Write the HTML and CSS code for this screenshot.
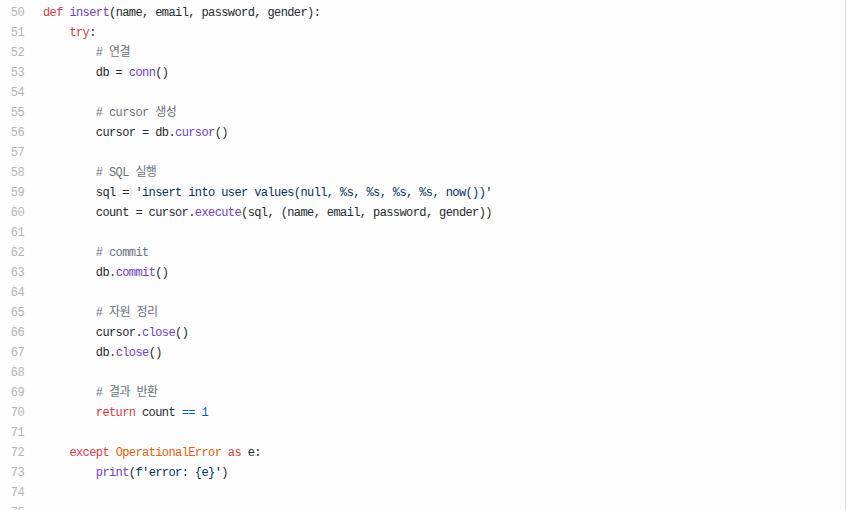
FILE: index.html
```html
<!DOCTYPE html>
<html lang="ko">
<head>
<meta charset="utf-8">
<title>code</title>
<link rel="stylesheet" href="styles.css">
</head>
<body>
<div class="panel">
  <div class="code">
    <div class="ln">50</div><div class="src"><span class="k">def</span> <span class="f">insert</span>(name, email, password, gender):</div>
    <div class="ln">51</div><div class="src">    <span class="k">try</span>:</div>
    <div class="ln">52</div><div class="src">        <span class="c"># 연결</span></div>
    <div class="ln">53</div><div class="src">        db = <span class="f">conn</span>()</div>
    <div class="ln">54</div><div class="src"> </div>
    <div class="ln">55</div><div class="src">        <span class="c"># cursor 생성</span></div>
    <div class="ln">56</div><div class="src">        cursor = db.<span class="f">cursor</span>()</div>
    <div class="ln">57</div><div class="src"> </div>
    <div class="ln">58</div><div class="src">        <span class="c"># SQL 실행</span></div>
    <div class="ln">59</div><div class="src">        sql = <span class="s">'insert into user values(null, %s, %s, %s, %s, now())'</span></div>
    <div class="ln">60</div><div class="src">        count = cursor.<span class="f">execute</span>(sql, (name, email, password, gender))</div>
    <div class="ln">61</div><div class="src"> </div>
    <div class="ln">62</div><div class="src">        <span class="c"># commit</span></div>
    <div class="ln">63</div><div class="src">        db.<span class="f">commit</span>()</div>
    <div class="ln">64</div><div class="src"> </div>
    <div class="ln">65</div><div class="src">        <span class="c"># 자원 정리</span></div>
    <div class="ln">66</div><div class="src">        cursor.<span class="f">close</span>()</div>
    <div class="ln">67</div><div class="src">        db.<span class="f">close</span>()</div>
    <div class="ln">68</div><div class="src"> </div>
    <div class="ln">69</div><div class="src">        <span class="c"># 결과 반환</span></div>
    <div class="ln">70</div><div class="src">        <span class="k">return</span> count <span class="o">==</span> <span class="o">1</span></div>
    <div class="ln">71</div><div class="src"> </div>
    <div class="ln">72</div><div class="src">    <span class="k">except</span> <span class="t">OperationalError</span> <span class="k">as</span> e:</div>
    <div class="ln">73</div><div class="src">        <span class="f">print</span>(<span class="s">f'error: {e}'</span>)</div>
    <div class="ln">74</div><div class="src"> </div>
    <div class="ln">75</div><div class="src"> </div>
  </div>
</div>
</body>
</html>
```
FILE: styles.css
```css
html, body {
  margin: 0;
  padding: 0;
  background: #ffffff;
}

.panel {
  width: 845px;
  height: 510px;
  overflow: hidden;
  background: #fdfdfd;
  border-right: 1px solid #dedede;
}

.code {
  display: grid;
  grid-template-columns: 24px 1fr;
  column-gap: 19px;
  padding-top: 3px;
  font-family: "Liberation Mono", "Noto Sans CJK KR", monospace;
  font-size: 12px;
  letter-spacing: -0.6px;
  line-height: 20px;
  color: #24292e;
}

.ln {
  text-align: right;
  color: #b4b4b4;
}

.src {
  white-space: pre;
}

.k { color: #d73a49; }
.f { color: #6f42c1; }
.c { color: #6a737d; }
.s { color: #032f62; }
.o { color: #005cc5; }
.t { color: #e36209; }
```
